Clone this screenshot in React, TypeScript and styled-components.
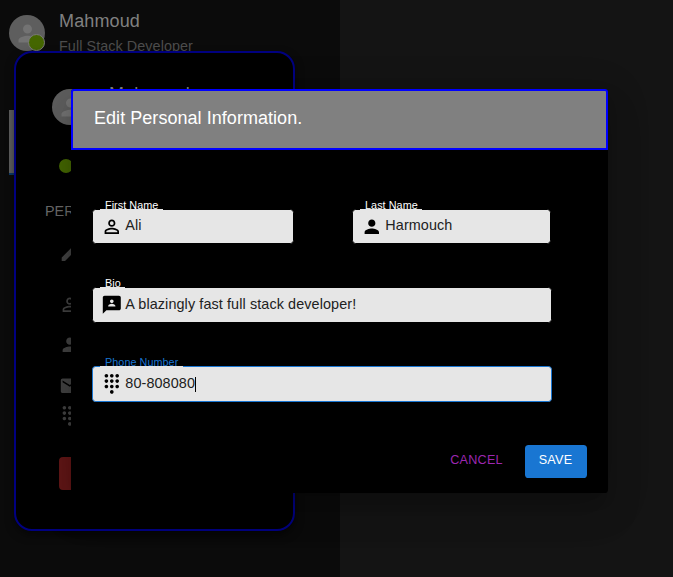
import React from "react";
import styled, { createGlobalStyle } from "styled-components";
import { Md3P, MdDialpad, MdEdit, MdMail, MdPermIdentity, MdPerson } from "react-icons/md";

const GlobalStyle = createGlobalStyle`
  * { box-sizing: border-box; }
  body { margin: 0; overflow: hidden; font-family: "Liberation Sans", Arial, sans-serif; background: #141414; }
`;

const Page = styled.div`
  position: relative;
  display: flex;
  width: 673px;
  height: 577px;
  overflow: hidden;
  background: #141414;
`;

const Sidebar = styled.aside`
  width: 340px;
  height: 577px;
  padding: 10px 9px;
  background: #0b0b0b;
`;

const UserRow = styled.div`
  display: flex;
  align-items: flex-start;
  gap: 14px;
  height: 48px;
`;

const Avatar = styled.div`
  display: flex;
  align-items: center;
  justify-content: center;
  position: relative;
  flex: none;
  width: 36px;
  height: 36px;
  border-radius: 50%;
  background: #5e5e5e;
  color: #737373;
  font-size: 27px;
`;

const RowAvatar = styled(Avatar)`
  margin-top: 5px;
`;

const StatusBadge = styled.span`
  position: absolute;
  right: 0;
  bottom: 0;
  width: 17px;
  height: 17px;
  border: 1px solid #7a7a7a;
  border-radius: 50%;
  background: #446600;
`;

const UserText = styled.div`
  display: flex;
  flex-direction: column;
`;

const UserName = styled.span`
  font-size: 18px;
  line-height: 22px;
  letter-spacing: 0.135px;
  color: #808080;
`;

const UserRole = styled.span`
  margin-top: 4px;
  font-size: 14.4px;
  line-height: 20px;
  letter-spacing: 0.06px;
  color: #4d4d4d;
`;

const SelectedTab = styled.div`
  width: 100px;
  height: 65px;
  margin-top: 52px;
  border-bottom: 2px solid #0d3b69;
  background: #606060;
`;

const ProfileCard = styled.section`
  position: absolute;
  left: 14px;
  top: 51px;
  width: 281px;
  height: 480px;
  padding: 36px 29px;
  border: 2px solid #000080;
  border-radius: 18px;
  background: #000;
  box-shadow: 0 4px 9px rgba(0, 0, 0, 0.5);
`;

const CardHead = styled.div`
  display: flex;
  gap: 21px;
  padding-left: 7px;
  height: 70px;
`;

const CardName = styled.span`
  font-size: 18px;
  line-height: 22px;
  margin-top: -6px;
  letter-spacing: 0.135px;
  color: #808080;
`;

const CardStatus = styled.div`
  width: 14px;
  height: 14px;
  margin: 0 0 28px 14px;
  border-radius: 50%;
  background: #446600;
`;

const CardHeading = styled.div`
  font-size: 14.4px;
  line-height: 20px;
  white-space: nowrap;
  color: #6a6a6a;
`;

const DetailIcon = styled.div<{ $gap: number }>`
  width: 22px;
  height: 22px;
  margin: ${(p) => p.$gap}px 0 0 14px;
  font-size: 21.6px;
  line-height: 0;
  color: #424242;
`;

const CardAction = styled.div`
  width: 70px;
  height: 33px;
  margin: 30px 0 0 14px;
  border-radius: 4px;
  background: #611616;
`;

const Dialog = styled.section`
  position: absolute;
  left: 71px;
  top: 89px;
  width: 537px;
  height: 404px;
  border-radius: 3.6px;
  background: #000;
  box-shadow: 0 10px 14px -6px rgba(0, 0, 0, 0.2), 0 22px 34px 3px rgba(0, 0, 0, 0.1),
    0 8px 41px 7px rgba(0, 0, 0, 0.09);
`;

const DialogTitle = styled.h2`
  height: 61px;
  margin: 0;
  padding: 13px 21px 0;
  border: 2px solid #0000ff;
  border-radius: 3px 3px 0 0;
  background: #808080;
  color: #fff;
  font-size: 18px;
  font-weight: 400;
  line-height: 28px;
  letter-spacing: 0.045px;
`;

const Form = styled.div`
  display: flex;
  flex-direction: column;
  gap: 43px;
  padding: 59px 56px 0 21px;
`;

const FieldRow = styled.div`
  display: flex;
  justify-content: space-between;
  height: 35px;
  margin-right: 1px;
`;

const Field = styled.label<{ $w: number; $h: number; $focused?: boolean }>`
  position: relative;
  display: flex;
  align-items: center;
  width: ${(p) => p.$w}px;
  height: ${(p) => p.$h}px;
  padding-left: 7.5px;
  border: 1px solid ${(p) => (p.$focused ? "#1976d2" : "#000")};
  border-radius: 3.6px;
  background: #e6e6e6;
  color: #000;
`;

const Notch = styled.span<{ $w: number; $focused?: boolean }>`
  position: absolute;
  left: 7px;
  top: -11px;
  width: ${(p) => p.$w}px;
  height: 11px;
  padding-left: 5px;
  border-bottom: 1px solid #e6e6e6;
  white-space: nowrap;
  font-size: 10.8px;
  line-height: 13px;
  letter-spacing: 0.06px;
  color: ${(p) => (p.$focused ? "#1976d2" : "#fff")};
`;

const FieldIcon = styled.span`
  display: flex;
  width: 22px;
  font-size: 21.6px;
`;

const Value = styled.span`
  margin: -3px 0 0 2.8px;
  font-size: 14.4px;
  line-height: 20px;
  letter-spacing: 0.1px;
  white-space: nowrap;
  color: #212121;
`;

const Caret = styled.span`
  width: 1px;
  height: 15px;
  background: #000;
`;

const Actions = styled.div`
  display: flex;
  justify-content: flex-end;
  gap: 7px;
  margin-top: 43px;
  padding-right: 21px;
`;

const Button = styled.button<{ $primary?: boolean }>`
  width: ${(p) => (p.$primary ? 62 : 83)}px;
  height: 33px;
  padding: ${(p) => (p.$primary ? "0 1px 4px 0" : "0 0 4px")};
  border: 0;
  border-radius: 3.6px;
  background: ${(p) => (p.$primary ? "#1976d2" : "transparent")};
  color: ${(p) => (p.$primary ? "#fff" : "#9c27b0")};
  font-family: inherit;
  font-size: 12.6px;
  letter-spacing: 0.25px;
  text-transform: uppercase;
`;

interface TextFieldProps {
  label: string;
  value: string;
  icon: React.ReactNode;
  width: number;
  height: number;
  notch: number;
  focused?: boolean;
}

function TextField({ label, value, icon, width, height, notch, focused }: TextFieldProps) {
  return (
    <Field $w={width} $h={height} $focused={focused}>
      <Notch $w={notch} $focused={focused}>{label}</Notch>
      <FieldIcon>{icon}</FieldIcon>
      <Value>{value}</Value>
      {focused && <Caret />}
    </Field>
  );
}

export default function App() {
  return (
    <Page>
      <GlobalStyle />
      <Sidebar>
        <UserRow>
          <RowAvatar><MdPerson /><StatusBadge /></RowAvatar>
          <UserText>
            <UserName>Mahmoud</UserName>
            <UserRole>Full Stack Developer</UserRole>
          </UserText>
        </UserRow>
        <SelectedTab />
      </Sidebar>
      <ProfileCard>
        <CardHead>
          <Avatar><MdPerson /></Avatar>
          <CardName>Mahmoud</CardName>
        </CardHead>
        <CardStatus />
        <CardHeading>PERSONAL</CardHeading>
        <DetailIcon $gap={21}><MdEdit /></DetailIcon>
        <DetailIcon $gap={30}><MdPermIdentity /></DetailIcon>
        <DetailIcon $gap={18}><MdPerson /></DetailIcon>
        <DetailIcon $gap={19}><MdMail /></DetailIcon>
        <DetailIcon $gap={8}><MdDialpad /></DetailIcon>
        <CardAction />
      </ProfileCard>
      <Dialog>
        <DialogTitle>Edit Personal Information.</DialogTitle>
        <Form>
          <FieldRow>
            <TextField label="First Name" value="Ali" icon={<MdPermIdentity />} width={202} height={35} notch={63} />
            <TextField label="Last Name" value="Harmouch" icon={<MdPerson />} width={199} height={35} notch={62} />
          </FieldRow>
          <TextField label="Bio" value="A blazingly fast full stack developer!" icon={<Md3P />} width={460} height={36} notch={25} />
          <TextField label="Phone Number" value="80-808080" icon={<MdDialpad />} width={460} height={36} notch={83} focused />
        </Form>
        <Actions>
          <Button>Cancel</Button>
          <Button $primary>Save</Button>
        </Actions>
      </Dialog>
    </Page>
  );
}
